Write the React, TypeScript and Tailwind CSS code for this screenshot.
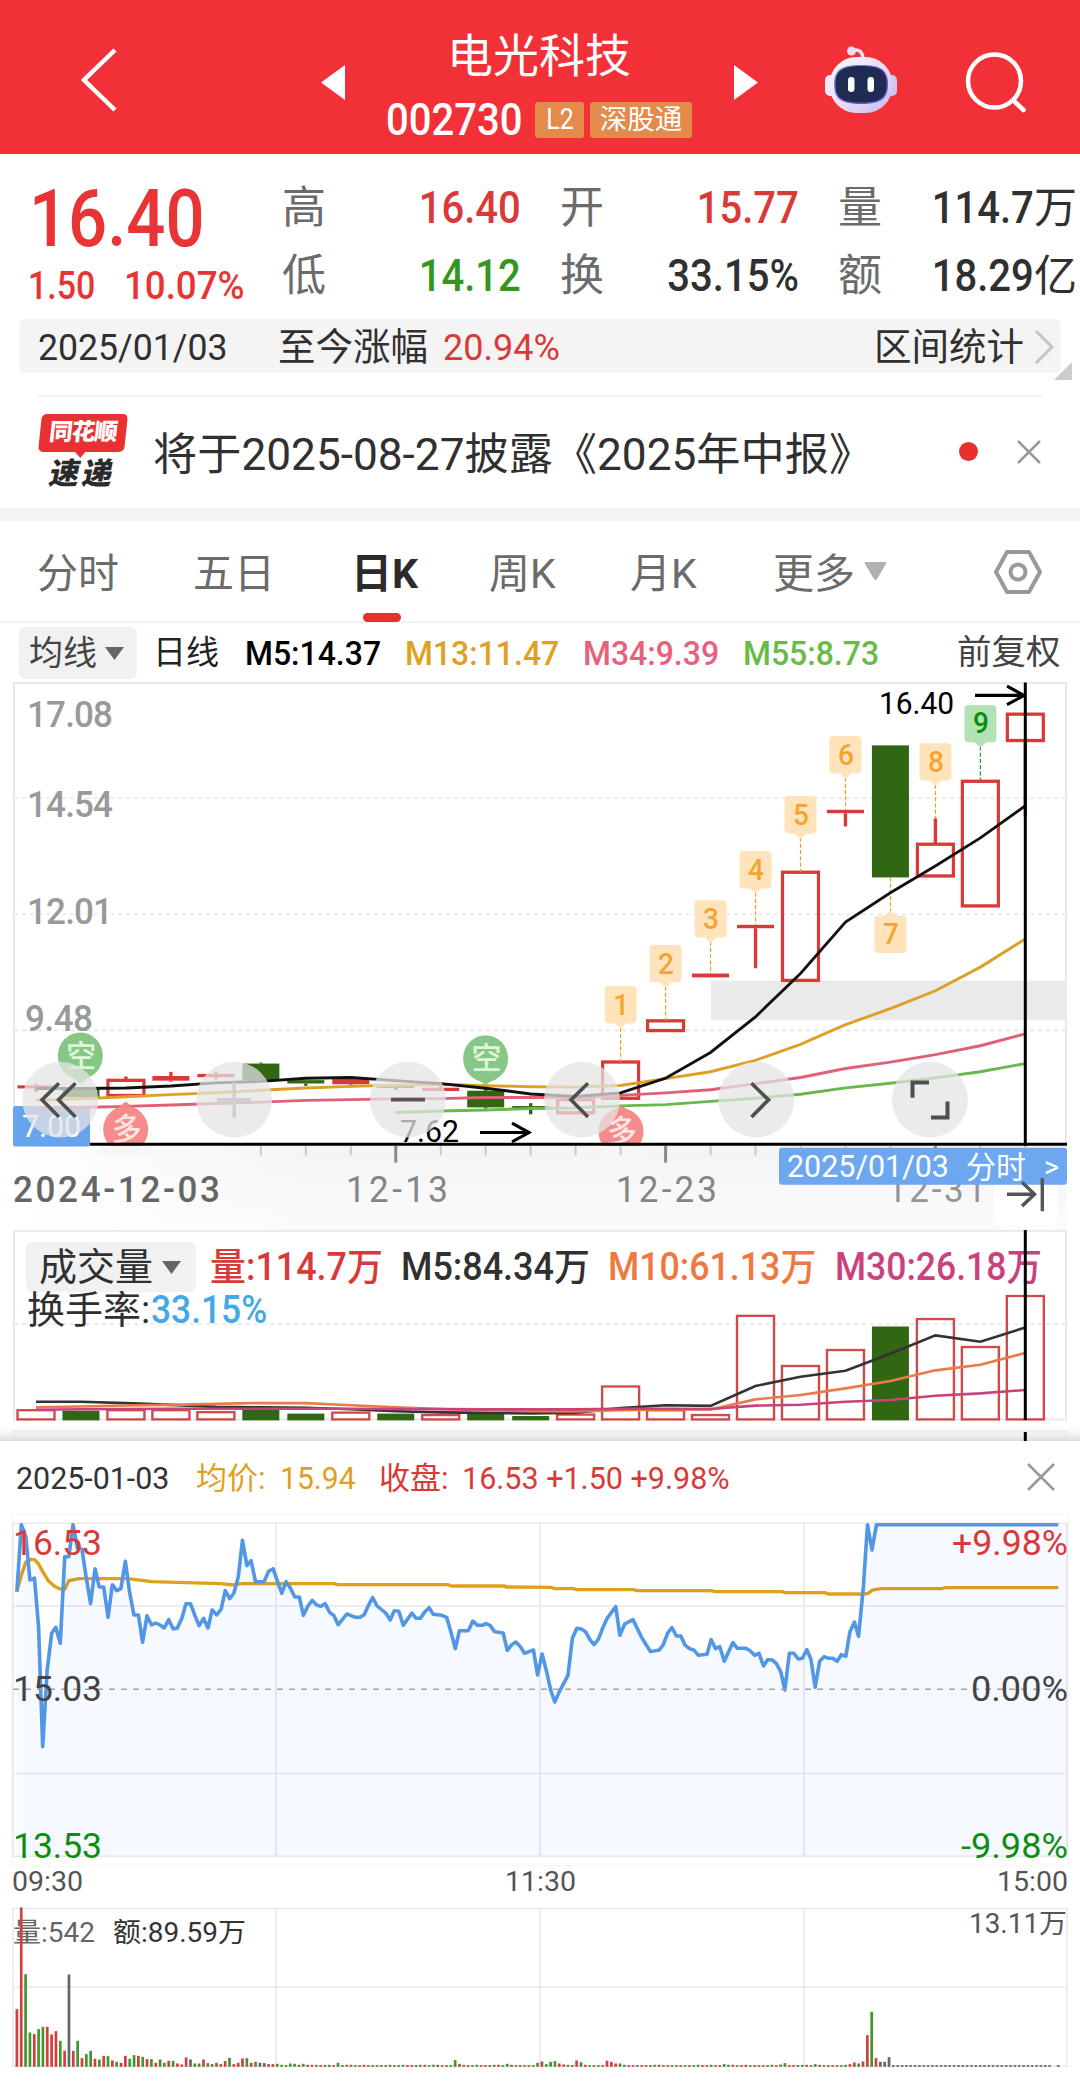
import React from 'react';

const RED = '#d93a37';
const GREEN = '#316612';

const STEP = 44.97;
const cx = (i: number) => 36 + STEP * i;

type Candle = { o: number; c: number; hi?: number; lo?: number; up: boolean; solid?: boolean };

// y positions of body top / bottom and wicks
const candles: Candle[] = [
  { o: 1070.5, c: 1073.5, hi: 1069, lo: 1077, up: true, solid: true },
  { o: 1073, c: 1082, lo: 1083, up: false },
  { o: 1065.7, c: 1080.3, hi: 1062, up: true },
  { o: 1061.5, c: 1066, hi: 1057.5, lo: 1067, up: true, solid: true },
  { o: 1059.5, c: 1062.7, hi: 1057.5, lo: 1064.5, up: true, solid: true },
  { o: 1049.5, c: 1065.3, hi: 1048.5, up: false },
  { o: 1065.5, c: 1068.7, lo: 1071, up: false },
  { o: 1064.5, c: 1069.5, lo: 1072.5, up: true, solid: true },
  { o: 1070.5, c: 1073, lo: 1075, up: false },
  { o: 1072.8, c: 1076, hi: 1070.5, up: true, solid: true },
  { o: 1075.7, c: 1091.8, hi: 1074, lo: 1093, up: false },
  { o: 1090.5, c: 1093.5, hi: 1087.7, lo: 1098.4, up: false },
  { o: 1084.3, c: 1097, up: true },
  { o: 1048, c: 1083, up: true },
  { o: 1008.3, c: 1017.7, up: true },
  { o: 962.7, c: 966.4, up: true, solid: true },
  { o: 915.7, c: 919, lo: 957.6, up: true, solid: true },
  { o: 865, c: 969.3, up: true },
  { o: 804.8, c: 808.1, lo: 820.8, up: true, solid: true },
  { o: 742.7, c: 870, up: false },
  { o: 838, c: 868.6, hi: 813, up: true },
  { o: 777.3, c: 897.5, up: true },
  { o: 712.6, c: 738, lo: 811, up: true },
];

const ma5 = [1073.6, 1073.6, 1073, 1071.2, 1068.1, 1066.7, 1063.6, 1063, 1066, 1068.8, 1073.3, 1078.8, 1081.2, 1077.8, 1063.6, 1038.8, 1004.4, 962.7, 913.1, 884.9, 859, 831.9, 800.9];
const ma13 = [1085, 1083.6, 1081.5, 1079.5, 1077.7, 1075.3, 1073, 1071.5, 1070.3, 1069.5, 1070.8, 1071.8, 1072.2, 1070.6, 1064, 1057.4, 1046.4, 1030.9, 1012, 996.5, 979.3, 956.5, 929.3];
const ma34 = [1093, 1091.9, 1090.8, 1089.5, 1088, 1086.7, 1085, 1084.3, 1083.6, 1083.3, 1082.3, 1082.3, 1082.5, 1080.2, 1077.8, 1074.7, 1068.8, 1062.9, 1054.3, 1048.1, 1040.9, 1032.3, 1020.9];
const ma55 = [1096.7, 1095.3, 1094.3, 1092.9, 1092.2, 1090.3, 1089.1, 1086, 1082.9, 1079.1, 1072.9, 1068.5, 1063.3, 1057.4, 1049.5];

const vols = [1416.5, 1417, 1416.5, 1416.5, 1418.5, 1416, 1420, 1419, 1420, 1421.5, 1420, 1422.5, 1421, 1392, 1416.6, 1421.5, 1319, 1370.8, 1354.3, 1330, 1322.3, 1351.2, 1298.5];
const vma5 = [1407.7, 1407.7, 1409.2, 1411, 1413, 1413.5, 1414, 1415.5, 1417.5, 1418.7, 1419.3, 1419.7, 1419, 1414.3, 1411.3, 1412, 1391.5, 1382, 1375.7, 1358.1, 1339.2, 1345.7, 1331];
const vma10 = [1413.5, 1412.6, 1411.6, 1411, 1410, 1409, 1409.2, 1411.3, 1413.5, 1415.2, 1416.5, 1417.5, 1417.7, 1416.5, 1415.6, 1415.8, 1405.3, 1400.8, 1393.9, 1386.3, 1375.3, 1369.5, 1357.4];
const vma30 = [1416, 1415.5, 1415.2, 1415, 1415, 1415, 1415, 1415, 1415.2, 1415.4, 1415.6, 1415.6, 1415.6, 1415, 1415, 1415.3, 1411.8, 1410.8, 1407.7, 1406, 1401.5, 1399.1, 1395.6];

const path = (ys: number[], start = 0) => ys.map((y, i) => `${cx(i + start).toFixed(1)},${y}`).join(' ');

// count markers: [label, candle index, top of the tag]
const counts: [string, number, number][] = [
  ['1', 13, 974.8], ['2', 14, 935.2], ['3', 15, 892], ['4', 16, 844.6], ['5', 17, 791.6],
  ['6', 18, 733.7], ['7', 19, 907], ['8', 20, 740.6], ['9', 21, 703.7],
];

const price =
  '49,275 62,74 75,110 87,240 100,234 112,380 124,740 137,510 150,400 162,382 175,430 188,170 200,170 212,74 225,145 238,148 250,230 263,311 276,206 288,261 301,261 314,352 326,254 339,272 351,266 364,184 376,275 389,345 402,345 414,427 427,347 440,375 452,369 465,375 477,384 490,359 503,387 515,384 528,355 540,311 553,311 566,347 578,377 591,355 604,384 616,330 629,345 642,328 654,272 667,296 679,280 692,230 704,121 717,197 729,182 742,245 767,245 780,214 793,206 806,245 818,280 831,245 843,264 856,291 869,291 881,346 894,318 907,301 919,315 932,319 944,311 957,337 969,346 982,374 1007,342 1032,352 1045,352 1057,345 1070,316 1082,293 1095,318 1120,339 1133,360 1145,332 1158,334 1171,376 1196,339 1208,355 1221,355 1233,336 1246,323 1258,343 1283,346 1297,352 1309,395 1322,446 1334,392 1360,392 1373,363 1386,376 1400,376 1411,371 1423,376 1436,395 1461,399 1473,451 1486,434 1498,426 1511,440 1523,460 1549,450 1561,525 1574,462 1586,510 1599,570 1611,606 1624,575 1649,527 1662,415 1675,385 1688,387 1700,395 1713,419 1725,434 1738,417 1750,384 1763,355 1788,320 1800,406 1814,372 1838,359 1863,412 1876,434 1889,455 1914,450 1926,434 1939,399 1951,383 1964,408 1977,408 1989,435 2002,446 2015,450 2028,466 2053,463 2065,419 2078,446 2090,440 2103,484 2128,428 2141,445 2166,445 2178,452 2191,466 2204,460 2217,498 2229,479 2241,479 2254,490 2267,515 2279,570 2292,460 2305,460 2318,477 2330,475 2343,449 2355,479 2367,562 2380,484 2393,470 2406,475 2418,475 2431,484 2443,464 2456,469 2468,395 2481,366 2493,409 2507,260 2519,74 2532,150 2545,74 3073,74';
const average =
  '49,275 62,225 75,187 90,178 100,179 112,192 124,215 140,242 160,260 175,267 188,268 200,242 230,236 370,236 400,240 440,245 540,248 640,251 680,255 700,251 970,251 980,254 1300,254 1310,258 1465,258 1470,261 1600,262 1610,266 1665,266 1675,269 1840,269 1850,272 2065,272 2075,275 2270,275 2280,278 2395,278 2405,282 2510,282 2520,280 2535,270 2560,266 2735,266 2745,263 3073,263';

const opening =
  'r173 r478 g278 g103 r98 g113 g120 r120 r97 r107 g78 r48 k277 r48 g78 r26 g38 g48 r24 g22 r33 g32 r19 g15 r12 r33 g24 g35 r33 g30 r23 g23 r12 g22 g12 r18 g18 r10 r7 r28 k22 g10 g10 r22 g11 r8 g12 r8 r17 g27 r8 r12 r25 g26 r12 g15 k12 k11 r8 r8 g9 g6 g5 g10 g9 r6 g9 r6 r6'.split(' ');
const later: Record<number, string> = {
  74: 'g12', 101: 'g20', 102: 'r9', 113: 'g9', 120: 'g12', 121: 'r16', 122: 'g8', 123: 'g15', 124: 'g17', 125: 'r10', 126: 'r7', 129: 'r19', 130: 'g14',
  136: 'r18', 137: 'r15', 138: 'r10', 139: 'g10', 163: 'g8', 176: 'g7', 177: 'g11', 184: 'g8', 192: 'r8', 193: 'r13', 194: 'g10', 195: 'r16', 196: 'r95',
  197: 'g165', 198: 'r26', 199: 'k15', 200: 'k15', 201: 'k29',
};
const filler = ['g5', 'r5', 'g6', 'r5', 'r5', 'g5', 'k5', 'g6', 'g5', 'r6', 'r5'];
const minuteBars = Array.from({ length: 241 }, (_, i) => {
  if (i < opening.length) return opening[i];
  if (later[i]) return later[i];
  if (i > 201) return i === 239 ? 'k0' : 'k5';
  return filler[(i * 7 + (i >> 3)) % filler.length];
});
const tone: Record<string, string> = { r: '#d0403f', g: '#43952f', k: '#666666' };

interface LabelProps {
  x: number;
  y: number;
  w: number;
  size: number;
  fill: string;
  weight?: number;
  spaced?: boolean;
  children: string;
}

const Label: React.FC<LabelProps> = ({ x, y, w, size, fill, weight = 400, spaced, children }) => (
  <text x={x} y={y} textLength={w} lengthAdjust={spaced ? 'spacing' : 'spacingAndGlyphs'} fontSize={size} fill={fill} fontWeight={weight}>{children}</text>
);

const Stat: React.FC<{ label: string; value: string; unit?: string; color: string }> = ({ label, value, unit, color }) => (
  <div className="flex h-[68px] items-center justify-between">
    <span className="text-[44px] text-[#6b6b6b]">{label}</span>
    <span className={`flex items-center text-[45px] font-medium ${color}`}>
      <span className="inline-block origin-right scale-x-[0.89]">{value}</span>
      {unit && <span className="text-[43px] font-normal">{unit}</span>}
    </span>
  </div>
);

const Header = () => (
  <header className="flex h-[154px] shrink-0 items-start bg-[#f23038]">
    <svg className="ml-[78px] mt-[46px]" width="42" height="68" fill="none" stroke="#fff" strokeWidth="4.5"><path d="M37 4 6 34l31 30" /></svg>
    <svg className="ml-[201px] mt-[64px]" width="24" height="38" fill="#fff"><path d="M24 1v35L0 18.500z" /></svg>
    <div className="flex w-[388px] flex-col items-center pt-[28px]">
      <h1 className="text-[46px] leading-[56px] text-white">电光科技</h1>
      <div className="mt-[7px] flex h-[58px] w-[306px] items-center">
        <span className="w-[149px] text-[44px] font-medium text-white"><span className="inline-block origin-left scale-x-[0.91]">002730</span></span>
        <span className="flex h-[36px] w-[49px] items-center justify-center rounded-[3px] bg-[#e48b4b] text-[29px] text-white">
          <span className="inline-block scale-x-[0.86]">L2</span>
        </span>
        <span className="ml-[6px] flex h-[36px] w-[102px] items-center justify-center rounded-[3px] bg-[#e48b4b] text-[27.5px] text-white">深股通</span>
      </div>
    </div>
    <svg className="mt-[64px]" width="26" height="38" fill="#fff"><path d="M1 1v35L25 18.500z" /></svg>
    <svg className="ml-[65px] mt-[44px]" width="76" height="72" viewBox="0 0 76 72">
      <defs>
        <linearGradient id="shell" x1="0" y1="0" x2="1" y2="1">
          <stop offset="0" stopColor="#fdf7fb" />
          <stop offset="0.55" stopColor="#e6dcf5" />
          <stop offset="1" stopColor="#c3b8f0" />
        </linearGradient>
        <linearGradient id="visor" x1="0" y1="0" x2="1" y2="1">
          <stop offset="0" stopColor="#5fb3dc" />
          <stop offset="0.5" stopColor="#7a4fe0" />
          <stop offset="1" stopColor="#5a50dd" />
        </linearGradient>
      </defs>
      <path d="M27 7q12-4 12 9" fill="none" stroke="#f0dfee" strokeWidth="3.500" />
      <circle cx="27.500" cy="7" r="4.500" fill="#eddcf0" />
      <rect x="1" y="31" width="12" height="21" rx="5" fill="#efe7fa" />
      <rect x="61" y="31" width="12" height="21" rx="5" fill="#cfc4f2" />
      <rect x="5.500" y="13" width="63" height="56" rx="27" fill="url(#shell)" />
      <path d="M37 21c20 0 27 5 27 19s-6 20-27 20-27-6-27-20 7-19 27-19z" fill="url(#visor)" />
      <path d="M37 22c19 0 25.500 4.500 25.500 18S57 58.500 37 58.500 11.500 53.500 11.500 40 18 22 37 22z" fill="#1f2b50" />
      <rect x="24" y="33" width="6.500" height="15" rx="3.200" fill="#fff" />
      <rect x="43.500" y="33" width="6.500" height="15" rx="3.200" fill="#fff" />
    </svg>
    <svg className="ml-[64px] mt-[48px]" width="66" height="66" fill="none" stroke="#fff" strokeWidth="4.500">
      <circle cx="30.500" cy="33" r="26.500" />
      <path d="m49.500 52.500 10 9.500" strokeLinecap="round" />
    </svg>
  </header>
);

const Summary = () => (
  <section className="flex h-[165px] shrink-0 pt-[20px]">
    <div className="w-[282px] shrink-0 text-[#e83434]">
      <div className="ml-[29px] h-[88px] text-[80px] font-medium leading-[90px]"><span className="inline-block origin-left scale-x-[0.86]">16.40</span></div>
      <div className="flex h-[48px] items-center text-[39px]">
        <span className="ml-[28px] w-[96px]"><span className="inline-block origin-left scale-x-[0.87] font-medium">1.50</span></span>
        <span className="inline-block origin-left scale-x-[0.94] font-medium">10.07%</span>
      </div>
    </div>
    <div className="grid h-[136px] w-[795px] shrink-0 grid-cols-3 gap-x-[39px]">
      <Stat label="高" value="16.40" color="text-[#d93a37]" />
      <Stat label="开" value="15.77" color="text-[#d93a37]" />
      <Stat label="量" value="114.7" unit="万" color="text-[#303030]" />
      <Stat label="低" value="14.12" color="text-[#35961f]" />
      <Stat label="换" value="33.15%" color="text-[#303030]" />
      <Stat label="额" value="18.29" unit="亿" color="text-[#303030]" />
    </div>
  </section>
);

const RangeBar = () => (
  <div className="relative mx-[19px] flex h-[54px] shrink-0 items-center rounded-md bg-[#f4f4f4] pt-[2px] text-[37.5px] text-[#303030]">
    <span className="ml-[19px] w-[240px]"><span className="inline-block origin-left scale-x-[0.95]">2025/01/03</span></span>
    <span className="w-[165px]">至今涨幅</span>
    <span className="text-[#d93a37]"><span className="inline-block origin-left scale-x-[0.96]">20.94%</span></span>
    <span className="ml-auto">区间统计</span>
    <svg className="ml-[7px] mr-[6px]" width="24" height="40" fill="none" stroke="#c4c4c4" strokeWidth="3"><path d="m5 4 16 16L5 36" /></svg>
    <svg className="absolute -right-[11px] top-[43px]" width="18" height="18" fill="#cccccc"><path d="M18 0v18H0z" /></svg>
  </div>
);

const News = () => (
  <div className="mx-[38px] mt-[22px] flex h-[113px] shrink-0 items-start border-t-2 border-[#f3f3f3]">
    <div className="mt-[17px] flex w-[89px] flex-col items-center">
      <div className="relative flex h-[38px] w-[86px] -skew-x-6 items-center justify-center rounded-[5px] bg-[#e93033]">
        <span className="text-[23.5px] font-black leading-none tracking-[-1px] text-white">同花顺</span>
        <svg className="absolute left-[36px] top-[37px]" width="12" height="7" fill="#e93033"><path d="M0 0h12L7 7z" /></svg>
      </div>
      <span className="mt-[4px] -skew-x-12 text-[30px] font-black leading-[36px] tracking-[3px] text-[#2a2a2a]">速递</span>
    </div>
    <p className="ml-[26px] mt-[26px] w-[806px] whitespace-nowrap text-[44.2px] leading-[64px] text-[#303030]">
      <span>将于2025-08-27披露《2025年中报》</span>
    </p>
    <span className="mt-[45px] h-[19px] w-[19px] shrink-0 rounded-full bg-[#e93030]" />
    <svg className="ml-[38px] mt-[42px] shrink-0" width="26" height="26" fill="none" stroke="#999" strokeWidth="2.500"><path d="m2 2 22 22M24 2 2 24" /></svg>
  </div>
);

const Tabs = () => (
  <nav className="flex h-[102px] shrink-0 items-start border-b-2 border-[#f1f1f1] pl-[37px] pt-[23px] text-[41px] leading-[60px] text-[#6b6b6b]">
    <span className="w-[156px]">分时</span>
    <span className="w-[158px]">五日</span>
    <div className="flex w-[138px] flex-col">
      <span className="font-bold text-[#2b2b2b]">日K</span>
      <span className="ml-[12px] mt-[9px] h-[9px] w-[38px] rounded-full bg-[#e93030]" />
    </div>
    <span className="w-[141px]">周K</span>
    <span className="w-[143px]">月K</span>
    <span className="w-[91px]">更多</span>
    <svg className="mt-[18px]" width="23" height="19" fill="#b0b0b0"><path d="M2 0h19q2 0 1 2l-9 15q-1.500 2-3 0L1 2q-1-2 1-2z" /></svg>
    <svg className="ml-[106px] mt-[3px]" width="50" height="50" fill="none" stroke="#999" strokeWidth="4">
      <path d="M14 5h22l11 20-11 20H14L3 25z" strokeLinejoin="round" />
      <circle cx="25" cy="25" r="7.500" />
    </svg>
  </nav>
);

const Averages = () => (
  <div className="flex h-[58px] shrink-0 items-center pl-[19px] pt-[2px] text-[34px]">
    <span className="flex h-[52px] w-[118px] items-center rounded-md bg-[#f1f1f1] pl-[10px] text-[#444]">
      均线
      <svg className="ml-[8px]" width="19" height="13" fill="#666"><path d="M0 0h19l-9.500 13z" /></svg>
    </span>
    <span className="ml-[16px] w-[92px] text-[33px] text-[#222]">日线</span>
    <span className="w-[160px] text-black"><span className="inline-block origin-left scale-x-[0.94] font-medium">M5:14.37</span></span>
    <span className="w-[178px] text-[#e0a020]"><span className="inline-block origin-left scale-x-[0.94] font-medium">M13:11.47</span></span>
    <span className="w-[160px] text-[#e9607a]"><span className="inline-block origin-left scale-x-[0.94] font-medium">M34:9.39</span></span>
    <span className="w-[214px] text-[#68bb46]"><span className="inline-block origin-left scale-x-[0.94] font-medium">M55:8.73</span></span>
    <span className="text-[34.5px] text-[#444]">前复权</span>
  </div>
);

const Flag: React.FC<{ x: number; y: number; tip: number; text: string; fill: string; ink: string }> = ({ x, y, tip, text, fill, ink }) => {
  const s = tip > y ? 1 : -1;
  return (
    <g opacity="0.95">
      <circle cx={x} cy={y} r="22.500" fill={fill} />
      <path d={`M${x - 12} ${y + s * 18}L${x} ${tip}L${x + 12} ${y + s * 18}z`} fill={fill} />
      <text x={x + 1} y={y + 10.5} textAnchor="middle" fontSize="30" fontWeight="500" fill={ink}>{text}</text>
    </g>
  );
};

const CountTag: React.FC<{ label: string; i: number; top: number }> = ({ label, i, top }) => {
  const x = cx(i);
  const green = label === '9';
  const below = label === '7';
  const c = candles[i];
  const end = c.hi && c.hi < c.o ? c.hi : c.o;
  const fill = green ? '#b3e2b5' : '#ffe3bb';
  return (
    <g>
      <path
        d={below ? `M${x} ${c.c}V${top - 4}` : `M${x} ${top + 40}V${end}`}
        stroke={green ? '#1b9a2a' : '#dba52c'} strokeWidth="1.200" strokeDasharray="4 2"
      />
      <rect x={x - 16} y={top} width="32" height="36" rx="4" fill={fill} />
      <path d={below ? `M${x - 7} ${top + 1}l7 -6 7 6z` : `M${x - 7} ${top + 35}l7 6 7 -6z`} fill={fill} />
      <text x={x + 0.5} y={top + 27.5} textAnchor="middle" fontSize="28" fontWeight="500" fill={green ? '#089208' : '#f5a52f'}>{label}</text>
    </g>
  );
};

const KLine = () => (
  <svg className="block shrink-0" width="1080" height="549" viewBox="0 680.6 1080 529.4" preserveAspectRatio="none" fill="none">
    <defs>
      <linearGradient id="axis" x1="0" y1="0" x2="0" y2="1">
        <stop offset="0" stopColor="#f4f4f4" />
        <stop offset="1" stopColor="#fbfbfb" />
      </linearGradient>
      <linearGradient id="fade" x1="0" y1="0" x2="1" y2="0">
        <stop offset="0" stopColor="#fff" />
        <stop offset="0.3" stopColor="#fff" stopOpacity="0" />
      </linearGradient>
    </defs>
    <rect x="0" y="1129" width="1067" height="81" fill="url(#axis)" />
    <rect x="0" y="1129" width="1067" height="81" fill="url(#fade)" />
    <path d="M14 1128V682.500H1066V1128" stroke="#e9e9e9" strokeWidth="2" />
    <path d="M14 793.500H1066M14 905.500H1066M14 1017.500H1066" stroke="#e6e6e6" strokeWidth="1.500" strokeDasharray="4 4" />
    <rect x="711" y="969.600" width="356" height="38" fill="#eaeaea" />
    <Label x={27} y={725} w={86} size={35} fill="#999" weight={500} spaced>17.08</Label>
    <Label x={27} y={811.500} w={86} size={35} fill="#999" weight={500} spaced>14.54</Label>
    <Label x={27} y={914.500} w={86} size={35} fill="#999" weight={500} spaced>12.01</Label>
    <Label x={25} y={1018} w={68} size={35} fill="#999" weight={500} spaced>9.48</Label>

    <rect x="13" y="1090.500" width="77" height="39" rx="2" fill="#68a4ee" />
    <Label x={22} y={1120} w={59} size={31} fill="#fff">7.00</Label>
    <Flag x={80.300} y={1042} tip={1069} text="空" fill="#81c57f" ink="#dcf8d8" />
    <Flag x={485.600} y={1044.700} tip={1070} text="空" fill="#81c57f" ink="#dcf8d8" />

    {candles.map((c, i) => {
      const color = c.up ? RED : GREEN;
      return (
        <g key={i} stroke={color}>
          {c.hi && <path d={`M${cx(i)} ${c.hi}V${c.o}`} strokeWidth="3.400" />}
          {c.lo && <path d={`M${cx(i)} ${c.c}V${c.lo}`} strokeWidth="3.400" />}
          {c.up && !c.solid ? (
            <rect x={cx(i) - 18} y={c.o} width="36" height={c.c - c.o} strokeWidth="3.200" />
          ) : (
            <rect x={cx(i) - 18.5} y={c.o} width="37" height={c.c - c.o} fill={color} stroke="none" />
          )}
        </g>
      );
    })}
    {counts.map(([label, i, top]) => <CountTag key={label} label={label} i={i} top={top} />)}

    <polyline points={path(ma55, 8)} stroke="#68b94c" strokeWidth="2.800" />
    <polyline points={path(ma34)} stroke="#e0607a" strokeWidth="2.800" />
    <polyline points={path(ma13)} stroke="#dda025" strokeWidth="2.800" />
    <polyline points={path(ma5)} stroke="#111" strokeWidth="2.800" />
    <Flag x={125.700} y={1113} tip={1086} text="多" fill="#f58585" ink="#ffe4e0" />
    <Flag x={621} y={1115} tip={1090} text="多" fill="#f58585" ink="#ffe4e0" />
    <path d="M100 1129H150V1138H100zM595 1129H650V1140H595z" fill="#f6f6f6" />

    <Label x={400} y={1125} w={59} size={30} fill="#000">7.62</Label>
    <path d="M480 1116H529M512 1107L529 1116L512 1125" stroke="#000" strokeWidth="3" />
    <Label x={879} y={712.500} w={75} size={30} fill="#000">16.40</Label>
    <path d="M975 694.500H1024M1007 685.500L1024 694.500L1007 703.500" stroke="#000" strokeWidth="3" />

    {Array.from({ length: 18 }, (_, k) => k + 5).map((i) => {
      const major = i === 8 || i === 14 || i === 20;
      return <path key={i} d={`M${cx(i)} 1129v${major ? 16 : 9}`} stroke={major ? '#8a8a8a' : '#c9c9c9'} strokeWidth={major ? 3 : 2} />;
    })}
    <path d="M90 1127.300H1067" stroke="#000" strokeWidth="3" />
    <path d="M1025.300 682V1129" stroke="#000" strokeWidth="3" />

    {/* floating chart controls */}
    {[60.300, 234.200, 408, 582, 756.300, 929.900].map((x) => (
      <ellipse key={x} cx={x} cy="1084.300" rx="38" ry="36.500" fill="#e4e4e4" fillOpacity="0.74" />
    ))}
    <g stroke="#4f4f4f" strokeWidth="3.600">
      <path d="M59 1068.500L42 1084.500L59 1101M75.500 1068.500L58.500 1084.500L75.500 1101" />
      <path d="M391 1084.300H425" stroke="#5a5258" />
      <path d="M588 1068.500L571 1084.500L588 1101" />
      <path d="M751.500 1068.500L768.500 1084.500L751.500 1101" />
      <path d="M912.500 1082.500V1067.800H929M947.500 1086V1101.500H931" strokeWidth="4" />
    </g>
    <path d="M217 1084.500H251M234.200 1067.500V1101.500" stroke="#cfcfcf" strokeWidth="3.600" />

    <Label x={13} y={1183} w={207} size={35} fill="#666" weight={500} spaced>2024-12-03</Label>
    <Label x={346} y={1183} w={102} size={35} fill="#858585" spaced>12-13</Label>
    <Label x={616} y={1183} w={101} size={35} fill="#858585" spaced>12-23</Label>
    <Label x={887} y={1183} w={99} size={35} fill="#959595" spaced>12-31</Label>
    <rect x="994" y="1146" width="64" height="63" rx="12" fill="#fff" />
    <rect x="779" y="1130.800" width="288" height="35.500" rx="3" fill="#68a4ee" fillOpacity="0.97" />
    <Label x={787} y={1159} w={162} size={31} fill="#fff">2025/01/03</Label>
    <Label x={966} y={1159.500} w={60} size={30} fill="#fff">分时</Label>
    <Label x={1044} y={1159} w={15} size={29} fill="#fff">&gt;</Label>
    <path d="M1007 1175.500H1034M1022 1164L1034.500 1175.500L1022 1187M1042.300 1160V1192" stroke="#555" strokeWidth="3.400" />
  </svg>
);

const Volume = () => (
  <section className="relative h-[211px] shrink-0 overflow-hidden">
    <svg className="block" width="1080" height="211" viewBox="0 1230.3 1080 218" preserveAspectRatio="none" fill="none">
      <defs>
        <linearGradient id="edge" x1="0" y1="0" x2="0" y2="1">
          <stop offset="0" stopColor="#fff" stopOpacity="0" />
          <stop offset="1" stopColor="#d9d9d9" />
        </linearGradient>
      </defs>
      <path d="M14 1231H1066V1426H14zM14 1449V1438.500H1066V1449" stroke="#e9e9e9" strokeWidth="2" />
      <path d="M14 1327.500H1066" stroke="#e6e6e6" strokeWidth="1.500" strokeDasharray="4 4" />
      {vols.map((top, i) =>
        candles[i].up ? (
          <rect key={i} x={cx(i) - 18.500} y={top} width="37" height={1426 - top} stroke="#cf4a48" strokeWidth="2.400" />
        ) : (
          <rect key={i} x={cx(i) - 18.500} y={top} width="37" height={1427 - top} fill={GREEN} />
        )
      )}
      <polyline points={path(vma5)} stroke="#333" strokeWidth="2.700" />
      <polyline points={path(vma10)} stroke="#ec7a48" strokeWidth="2.700" />
      <polyline points={path(vma30)} stroke="#c9427c" strokeWidth="2.700" />
      <rect x="0" y="1430" width="1080" height="19" fill="url(#edge)" />
    </svg>
    <div className="absolute left-[26px] top-[12px] flex h-[50px] items-center text-[38px] text-[#303030]">
      <span className="flex h-[50px] w-[170px] items-center rounded-md bg-[#f1f1f1] pl-[13px]">
        成交量
        <svg className="ml-[9px]" width="19" height="13" fill="#666"><path d="M0 0h19l-9.500 13z" /></svg>
      </span>
      <span className="w-[205px] pl-[14px]"><span className="inline-block origin-left scale-x-[0.945] font-medium text-[#d93a37]">量:114.7万</span></span>
      <span className="w-[207px]"><span className="inline-block origin-left scale-x-[0.945] font-medium">M5:84.34万</span></span>
      <span className="w-[227px]"><span className="inline-block origin-left scale-x-[0.94] font-medium text-[#f07840]">M10:61.13万</span></span>
      <span><span className="inline-block origin-left scale-x-[0.935] font-medium text-[#c9427c]">M30:26.18万</span></span>
    </div>
    <div className="absolute left-[27px] top-[54px] flex h-[52px] items-center text-[38px] text-[#303030]">
      <span className="w-[124px]">换手率:</span>
      <span className="inline-block origin-left scale-x-[0.93] font-medium text-[#42a9e6]">33.15%</span>
    </div>
    <svg className="absolute left-[1023px] top-0" width="4" height="211"><path d="M2.300 0V190M2.300 202V211" stroke="#000" strokeWidth="3" /></svg>
  </section>
);

const Intraday = () => (
  <section className="flex h-[647px] shrink-0 flex-col bg-white">
    <div className="flex h-[70px] items-end pb-[9px] pl-[16px] text-[31px] leading-[46px] text-[#333]">
      <span className="w-[180px]"><span className="inline-block origin-left scale-x-[0.98]">2025-01-03</span></span>
      <span className="w-[84px] text-[#e0a020]">均价:</span>
      <span className="w-[99px] text-[#e0a020]"><span className="inline-block origin-left scale-x-[0.97]">15.94</span></span>
      <span className="w-[83px] text-[#d93a37]">收盘:</span>
      <span className="text-[30.500px] text-[#d93a37]">16.53 +1.50 +9.98%</span>
      <svg className="mb-[11px] ml-auto mr-[25px]" width="28" height="28" fill="none" stroke="#999" strokeWidth="2.600"><path d="m1 1 26 26M27 1 1 27" /></svg>
    </div>
    <svg className="block" width="1080" height="387" viewBox="0 1511.4 1080 399.8" preserveAspectRatio="none" fill="none">
      <rect x="12" y="1515" width="1056" height="363" stroke="#f6f6f6" strokeWidth="1.500" />
      <path d="M13 1524H1067V1868H13zM13 1609.500H1067M13 1782.500H1067M276 1524V1868M540 1524V1868M804 1524V1868" stroke="#e9e9e9" strokeWidth="1.600" />
      <g transform="translate(0 1500) scale(0.34439)" strokeLinejoin="round">
        <polyline points={average} stroke="#dfa01c" strokeWidth="10" />
        <polygon points={`${price} 3100,74 3100,1068 49,1068`} fill="#4a90ff" fillOpacity="0.05" />
        <polyline points={price} stroke="#5296e6" strokeWidth="10.500" />
      </g>
      <path d="M13 1695.600H1067" stroke="#a3a3a3" strokeWidth="1.600" strokeDasharray="6 6" />
      <Label x={13} y={1557} w={89} size={36.5} fill={RED}>16.53</Label>
      <Label x={13} y={1708} w={89} size={36.5} fill="#444">15.03</Label>
      <Label x={13} y={1869.500} w={89} size={36.5} fill="#0c8f10">13.53</Label>
      <Label x={952} y={1557} w={116} size={36.5} fill={RED}>+9.98%</Label>
      <Label x={971} y={1708} w={97} size={36.5} fill="#444">0.00%</Label>
      <Label x={961} y={1869.500} w={107} size={36.5} fill="#0c8f10">-9.98%</Label>
      <Label x={12} y={1903.500} w={71} size={29} fill="#555">09:30</Label>
      <Label x={505} y={1903.500} w={71} size={29} fill="#555">11:30</Label>
      <Label x={997} y={1903.500} w={71} size={29} fill="#555">15:00</Label>
    </svg>
    <svg className="block" width="1080" height="190" viewBox="0 1898.6 1080 196.3" preserveAspectRatio="none" fill="none">
      <path d="M13 1909.500H1067V2072.500H13zM13 1990.500H1067M276 1909V2072M540 1909V2072M804 1909V2072" stroke="#e9e9e9" strokeWidth="1.600" />
      <Label x={13} y={1943.700} w={82} size={28} fill="#666">量:542</Label>
      <Label x={113} y={1943.700} w={133} size={28} fill="#333">额:89.59万</Label>
      <Label x={969} y={1934.400} w={98} size={28} fill="#555">13.11万</Label>
      {minuteBars.map((b, i) => {
        const h = Number(b.slice(1)) / 2.9037;
        return <rect key={i} x={16.900 + i * 4.339 - 1.350} y={2073 - h} width="2.700" height={h} fill={tone[b[0]]} />;
      })}
    </svg>
  </section>
);

const App: React.FC = () => (
  <div className="flex h-[2088px] w-[1080px] flex-col overflow-hidden bg-white font-['Roboto','Noto_Sans_CJK_SC',sans-serif]">
    <Header />
    <Summary />
    <RangeBar />
    <News />
    <div className="h-[13px] shrink-0 bg-[#f4f4f4]" />
    <Tabs />
    <Averages />
    <KLine />
    <Volume />
    <Intraday />
  </div>
);

export default App;
